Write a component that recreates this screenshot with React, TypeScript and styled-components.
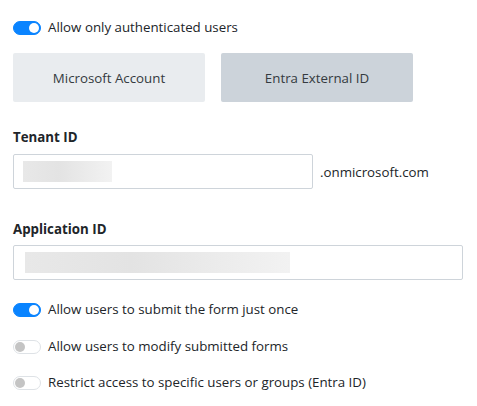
import React, { useState } from "react";
import styled, { createGlobalStyle } from "styled-components";

const GlobalStyle = createGlobalStyle`
  body {
    margin: 0;
    background: #fff;
    font-family: "Open Sans", "Noto Sans", sans-serif;
    font-size: 13.3px;
    color: #212529;
  }
`;

const Page = styled.div`
  width: 477px;
  padding: 17px 13px 0 13px;
  box-sizing: border-box;
  display: flex;
  flex-direction: column;
`;

const SwitchRow = styled.label<{ $gap?: number }>`
  display: flex;
  align-items: center;
  gap: 7px;
  height: 21px;
  line-height: 21px;
  margin-top: ${(p) => p.$gap ?? 0}px;
  cursor: pointer;
`;

const Track = styled.span<{ $on: boolean }>`
  position: relative;
  width: 28px;
  height: 14px;
  box-sizing: border-box;
  border-radius: 7px;
  flex-shrink: 0;
  background: ${(p) => (p.$on ? "#0a84ff" : "#fff")};
  border: 1px solid ${(p) => (p.$on ? "#0a84ff" : "#dee2e6")};
`;

const Knob = styled.span<{ $on: boolean }>`
  position: absolute;
  top: 1px;
  left: ${(p) => (p.$on ? "15px" : "1px")};
  width: 10px;
  height: 10px;
  border-radius: 50%;
  background: ${(p) => (p.$on ? "#fff" : "#c4c4c4")};
`;

const SegmentRow = styled.div`
  display: flex;
  gap: 16px;
  margin-top: 15px;
`;

const Segment = styled.button<{ $active: boolean }>`
  width: 192px;
  height: 49px;
  border: none;
  border-radius: 2px;
  background: ${(p) => (p.$active ? "#ccd3da" : "#e9ecef")};
  color: #343a40;
  font-family: inherit;
  font-size: 13.3px;
  padding: 0;
  cursor: pointer;
`;

const Label = styled.div<{ $gap: number }>`
  font-weight: 700;
  font-size: 13.3px;
  line-height: 21px;
  margin-top: ${(p) => p.$gap}px;
`;

const FieldRow = styled.div`
  display: flex;
  align-items: center;
  gap: 7px;
`;

const Field = styled.div<{ $width: number; $gap: number }>`
  width: ${(p) => p.$width}px;
  height: 35px;
  margin-top: ${(p) => p.$gap}px;
  box-sizing: border-box;
  border: 1px solid #ced4da;
  border-radius: 2px;
  padding: 6px ${(p) => (p.$width > 400 ? 11 : 9)}px;
  display: flex;
  align-items: center;
  background: #fff;
`;

const Redacted = styled.div<{ $width: number }>`
  width: ${(p) => p.$width}px;
  height: 21px;
  background: linear-gradient(90deg, #e8e8e8 0%, #e3e3e3 40%, #ececec 75%, #f2f2f2 100%);
  filter: blur(0.6px);
`;

const Suffix = styled.span`
  padding-top: 7px;
  color: #212529;
`;

function Toggle({ label, initial, gap }: { label: string; initial: boolean; gap?: number }) {
  const [on, setOn] = useState(initial);
  return (
    <SwitchRow $gap={gap} onClick={() => setOn(!on)}>
      <Track $on={on}>
        <Knob $on={on} />
      </Track>
      {label}
    </SwitchRow>
  );
}

export default function App() {
  const [provider, setProvider] = useState<"msa" | "entra">("entra");

  return (
    <>
      <GlobalStyle />
      <Page>
        <Toggle label="Allow only authenticated users" initial={true} />
        <SegmentRow>
          <Segment $active={provider === "msa"} onClick={() => setProvider("msa")}>
            Microsoft Account
          </Segment>
          <Segment $active={provider === "entra"} onClick={() => setProvider("entra")}>
            Entra External ID
          </Segment>
        </SegmentRow>

        <Label $gap={25}>Tenant ID</Label>
        <FieldRow>
          <Field $width={300} $gap={6}>
            <Redacted $width={89} />
          </Field>
          <Suffix>.onmicrosoft.com</Suffix>
        </FieldRow>

        <Label $gap={30}>Application ID</Label>
        <Field $width={450} $gap={5}>
          <Redacted $width={265} />
        </Field>

        <Toggle label="Allow users to submit the form just once" initial={true} gap={19} />
        <Toggle label="Allow users to modify submitted forms" initial={false} gap={16} />
        <Toggle label="Restrict access to specific users or groups (Entra ID)" initial={false} gap={15} />
      </Page>
    </>
  );
}
